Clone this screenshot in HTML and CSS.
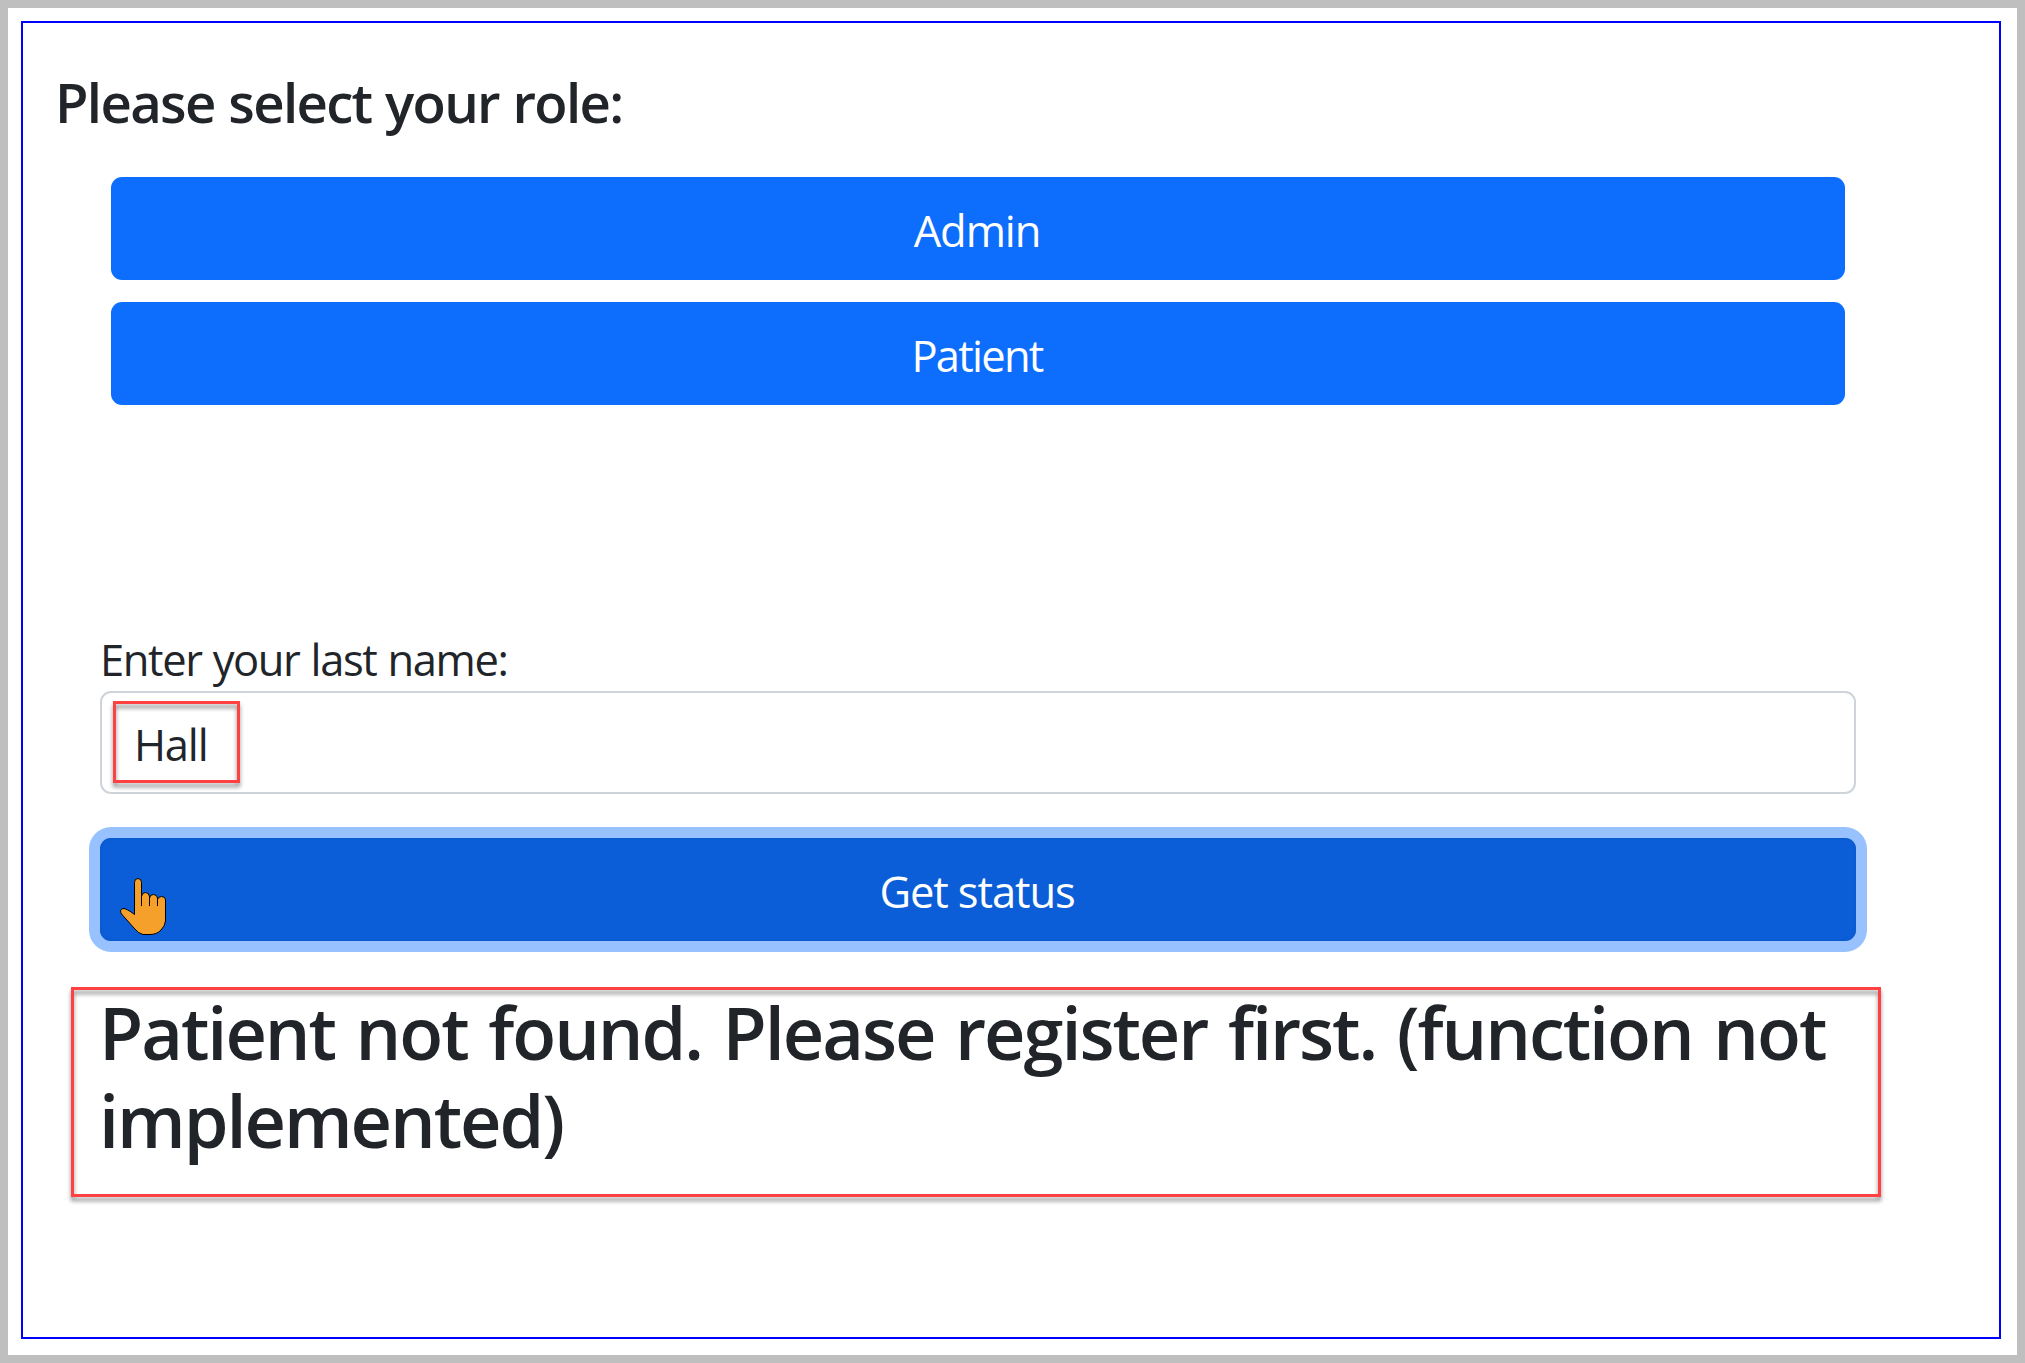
FILE: index.html
```html
<!DOCTYPE html>
<html lang="en">
<head>
<meta charset="utf-8">
<title>Select role</title>
<link rel="stylesheet" href="styles.css">
</head>
<body>
<main class="panel">
  <h5 class="heading">Please select your role:</h5>
  <div class="roles">
    <button class="btn" type="button">Admin</button>
    <button class="btn btn-patient" type="button">Patient</button>
  </div>
  <form class="lookup">
    <label class="label" for="name">Enter your last name:</label>
    <div class="field">
      <input class="input" id="name" type="text" value="Hall">
      <span class="mark mark-input"></span>
    </div>
    <div class="field">
      <button class="btn btn-active" type="button">Get status</button>
      <svg class="pointer" viewBox="0 0 48 60" width="48" height="60">
        <path d="M15.5 38.5V6.5Q15.5 2.5 19 2.5T22.5 6.5V29.5V20.5Q23 16.5 26.5 16.5T30.5 20.5V29.5V22Q31 18.5 34.5 18.5T38.5 22V29.5V23.5Q39.5 20.5 42.5 20.5Q46.5 20.5 46.5 24V45Q46 50 42 54Q38 58.5 31 58.5H24Q19 57.5 15 52L2.5 38Q0 34 4 32.5Q8 32.5 15.5 38.5Z" fill="#f5a02a" stroke="#000"/>
        <path d="M22.5 20V30M30.5 20V30M38.5 22V30" stroke="#000" fill="none"/>
      </svg>
    </div>
  </form>
  <div class="result">
    <h4 class="message">Patient not found. Please register first. (function not implemented)</h4>
    <span class="mark mark-result"></span>
  </div>
</main>
</body>
</html>
```
FILE: styles.css
```css
* { box-sizing: border-box; }
html { height: 100%; }
body {
  margin: 0;
  height: 100%;
  border: 8px solid #bfbfbf;
  padding: 13px 16px 16px 13px;
  background: #fff;
  color: #212529;
  font-family: "Segoe UI", "Open Sans", "Noto Sans", sans-serif;
  font-size: 43.5px;
  line-height: 66px;
}
.panel {
  height: 100%;
  border: 2px solid #00f;
  padding: 46px 0 0 33px;
}
.heading {
  margin: 0 0 0 -1px;
  font-size: 54.5px;
  font-weight: 600;
  line-height: 66px;
  letter-spacing: -1.65px;
  word-spacing: 1px;
}
.roles {
  display: flex;
  flex-direction: column;
  gap: 22px;
  margin: 42px 154px 0 55px;
}
.btn {
  display: block;
  width: 100%;
  height: 103px;
  padding: 4px 2px 0 0;
  border: 0;
  border-radius: 11px;
  background: #0d6efd;
  color: #fff;
  font: inherit;
  letter-spacing: -1.1px;
  text-align: center;
}
.btn-patient { letter-spacing: -1.75px; }
.lookup {
  margin: 222px 143px 0 44px;
}
.label {
  display: block;
  height: 64px;
  letter-spacing: -1.4px;
  word-spacing: 1.2px;
}
.field { position: relative; }
.input {
  display: block;
  width: 100%;
  height: 103px;
  padding: 4px 32px 0;
  border: 2px solid #ced4da;
  border-radius: 11px;
  color: inherit;
  font: inherit;
  letter-spacing: -1.2px;
}
.btn-active {
  margin-top: 44px;
  background: #0b5ed7;
  box-shadow: 0 0 0 11px #98c1ff, inset 0 0 3px #0a53be;
}
.pointer {
  position: absolute;
  left: 19px;
  top: 38px;
}
.mark {
  position: absolute;
  border: 3px solid #ff4141;
  filter: drop-shadow(0 4px 2px rgba(0, 0, 0, .45));
}
.mark-input { left: 13px; top: 10px; width: 127px; height: 82px; }
.result {
  position: relative;
  margin: 46px 118px 0 15px;
  height: 210px;
  padding: 1px 20px 0 28px;
}
.mark-result { inset: 0; }
.message {
  margin: 0;
  font-size: 72px;
  font-weight: 600;
  line-height: 88px;
  letter-spacing: -2.05px;
  word-spacing: 4px;
}
```
